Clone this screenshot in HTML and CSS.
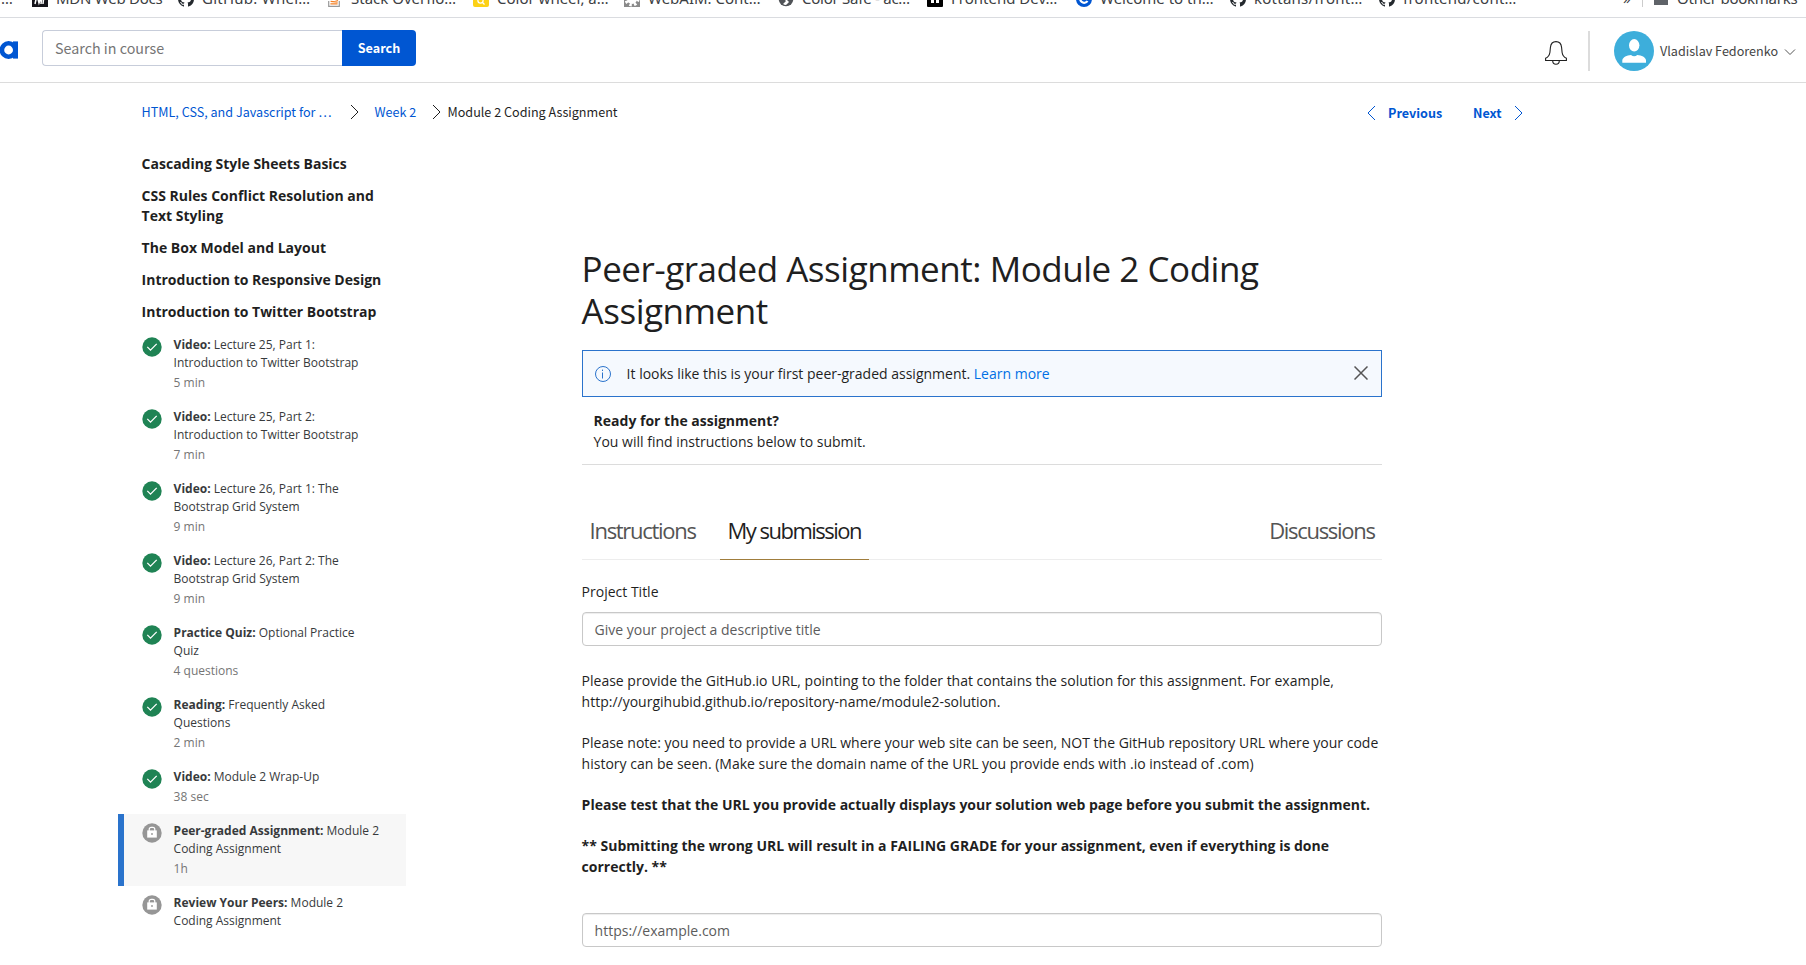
FILE: index.html
```html
<!DOCTYPE html>
<html lang="en">
<head>
<meta charset="utf-8">
<title>Module 2 Coding Assignment</title>
<link rel="stylesheet" href="styles.css">
</head>
<body>
<svg class="defs" width="0" height="0" aria-hidden="true">
  <symbol id="check" viewBox="0 0 20 20"><circle cx="10" cy="10" r="9.7" fill="#1f8354"/><path d="M5.3 9.9l3.2 3.2 6.2-6.2" fill="none" stroke="#fff" stroke-width="1.3"/></symbol>
  <symbol id="lock" viewBox="0 0 20 20"><circle cx="10" cy="10" r="9.7" fill="#969696"/><path d="M7.2 8V6.4a2 2 0 0 1 2-2h1.6a2 2 0 0 1 2 2V8" fill="none" stroke="#fff" stroke-width="1.2"/><path d="M5.2 7.4h9.6v7.2h-9.6z" fill="#fff"/><circle cx="10" cy="11" r=".9" fill="#969696"/></symbol>
  <symbol id="github" viewBox="0 0 16 16"><path fill="#24292e" d="M8 0C3.58 0 0 3.58 0 8c0 3.54 2.29 6.53 5.47 7.59.4.07.55-.17.55-.38 0-.19-.01-.82-.01-1.49-2.01.37-2.53-.49-2.69-.94-.09-.23-.48-.94-.82-1.13-.28-.15-.68-.52-.01-.53.63-.01 1.08.58 1.23.82.72 1.21 1.87.87 2.33.66.07-.52.28-.87.51-1.07-1.78-.2-3.64-.89-3.64-3.95 0-.87.31-1.59.82-2.15-.08-.2-.36-1.02.08-2.12 0 0 .67-.21 2.2.82.64-.18 1.32-.27 2-.27s1.36.09 2 .27c1.53-1.04 2.2-.82 2.2-.82.44 1.1.16 1.92.08 2.12.51.56.82 1.27.82 2.15 0 3.07-1.87 3.75-3.65 3.95.29.25.54.73.54 1.48 0 1.07-.01 1.93-.01 2.2 0 .21.15.46.55.38A8.01 8.01 0 0 0 16 8c0-4.42-3.58-8-8-8z"/></symbol>
</svg>

<nav class="bookmarks">
  <div class="bm bm-first"><span>…</span></div>
  <div class="bm tight"><svg viewBox="0 0 16 16"><path d="M0 0h16v16H0z" fill="#15141a"/><path d="M3 13L5 4l2 8 3-8-1 9M12 4l-1 9" fill="none" stroke="#fff" stroke-width="1.5"/></svg><span>MDN Web Docs</span></div>
  <div class="bm loose"><svg><use href="#github"/></svg><span>GitHub: Wher…</span></div>
  <div class="bm"><svg viewBox="0 0 16 16"><path d="M1.7 10v5.3h10.6V10" fill="none" stroke="#999" stroke-width="1.2"/><path d="M3.4 12.9h7.2M3.6 10.3l7.1.8M4.5 7.3l6.6 2.2" stroke="#f48024" stroke-width="1.3"/></svg><span>Stack Overflo…</span></div>
  <div class="bm"><svg viewBox="0 0 16 16"><rect width="16" height="16" rx="2" fill="#fcd116"/><circle cx="7.5" cy="9.5" r="2.6" fill="none" stroke="#fff" stroke-width="1.2"/><path d="M9.5 11.5l2 2" stroke="#fff" stroke-width="1.2"/></svg><span>Color wheel, a…</span></div>
  <div class="bm"><svg viewBox="0 0 16 16"><path d="M0 0h16v16H0z" fill="#8a8a8a"/><circle cx="8" cy="8" r="5" fill="#fff"/><circle cx="8" cy="8" r="6" fill="none" stroke="#fff" stroke-width="3" stroke-dasharray="2.4 2.3"/></svg><span>WebAIM: Cont…</span></div>
  <div class="bm tight"><svg viewBox="0 0 16 16"><circle cx="8" cy="8" r="7.3" fill="#505357"/><path d="M8 3v5l3 3-3 3a6 6 0 0 1-3-1l3-3-3-3z" fill="#fff"/></svg><span>Color Safe - ac…</span></div>
  <div class="bm"><svg viewBox="0 0 16 16"><rect width="16" height="16" rx="1" fill="#000"/><path d="M4 12V5h3v7M9 12V5h3v7" fill="#fff"/></svg><span>Frontend Dev…</span></div>
  <div class="bm"><svg viewBox="0 0 16 16"><circle cx="8" cy="8" r="8" fill="#0056d2"/><path d="M11.5 10A4 4 0 1 1 11 5" fill="none" stroke="#fff" stroke-width="2.2"/></svg><span>Welcome to th…</span></div>
  <div class="bm loose"><svg><use href="#github"/></svg><span>kottans/front…</span></div>
  <div class="bm loose"><svg><use href="#github"/></svg><span>frontend/cont…</span></div>
  <div class="bm"><span>»</span></div>
  <div class="bm bm-other tight"><svg viewBox="0 0 16 16"><path d="M1 2h5l2 2h7v10H1z" fill="#5f6368"/></svg><span>Other bookmarks</span></div>
</nav>

<header class="header">
  <svg class="logo" viewBox="0 0 18 18"><circle cx="8.6" cy="9" r="6.7" fill="none" stroke="#0056d2" stroke-width="4.6"/><path d="M13 .4h5v17.2h-5z" fill="#0056d2"/></svg>
  <form class="search">
    <div class="search-input">Search in course</div>
    <div class="search-btn">Search</div>
  </form>
  <svg class="bell" viewBox="0 0 24 26"><path d="M1.6 20.5v-2.3c2.6-1 3.8-2.600 4.300-5.700l.5-5C6.800 3.700 9 1.600 12 1.600s5.200 2.100 5.600 5.900l.5 5c.5 3.100 1.700 4.700 4.300 5.700v2.300zM8.700 20.700a3.300 3.500 0 0 0 6.600 0" fill="none" stroke="#1f1f1f" stroke-width="1.100"/></svg>
  <div class="user">
    <svg class="avatar" viewBox="0 0 40 40"><circle cx="20" cy="20" r="20" fill="#3daedb"/><ellipse cx="20.200" cy="14.300" rx="5.200" ry="6.200" fill="#fff"/><path d="M8.300 31.800v-2.600c.6-3 4.500-5 8.700-5.200a5 5 0 0 0 6.300 0c4.400.2 8.200 2.200 8.700 5.200v2.600z" fill="#fff"/></svg>
    <span class="uname">Vladislav Fedorenko</span>
    <svg class="caret" viewBox="0 0 12 8"><path d="M1 1.500l5 5 5-5" fill="none" stroke="#555" stroke-width="1"/></svg>
  </div>
</header>

<div class="crumbs">
  <a class="c1">HTML, CSS, and Javascript for …</a>
  <svg class="chev" viewBox="0 0 9 16"><path d="M1 1l7 7-7 7" fill="none" stroke="#1f1f1f"/></svg>
  <a class="c2">Week 2</a>
  <svg class="chev" viewBox="0 0 9 16"><path d="M1 1l7 7-7 7" fill="none" stroke="#1f1f1f"/></svg>
  <span class="c3">Module 2 Coding Assignment</span>
  <div class="pager">
    <svg class="chev" viewBox="0 0 9 16"><path d="M8 1L1 8l7 7" fill="none" stroke="#0056d2"/></svg>
    <b class="prev">Previous</b><b class="next">Next</b>
    <svg class="chev" viewBox="0 0 9 16"><path d="M1 1l7 7-7 7" fill="none" stroke="#0056d2"/></svg>
  </div>
</div>

<div class="body">
  <aside class="side">
    <h4>Cascading Style Sheets Basics</h4>
    <h4>CSS Rules Conflict Resolution and Text Styling</h4>
    <h4>The Box Model and Layout</h4>
    <h4>Introduction to Responsive Design</h4>
    <h4>Introduction to Twitter Bootstrap</h4>
    <div class="item"><svg><use href="#check"/></svg><div><b>Video:</b> Lecture 25, Part 1: Introduction to Twitter Bootstrap<small>5 min</small></div></div>
    <div class="item"><svg><use href="#check"/></svg><div><b>Video:</b> Lecture 25, Part 2: Introduction to Twitter Bootstrap<small>7 min</small></div></div>
    <div class="item"><svg><use href="#check"/></svg><div><b>Video:</b> Lecture 26, Part 1: The Bootstrap Grid System<small>9 min</small></div></div>
    <div class="item"><svg><use href="#check"/></svg><div><b>Video:</b> Lecture 26, Part 2: The Bootstrap Grid System<small>9 min</small></div></div>
    <div class="item"><svg><use href="#check"/></svg><div><b>Practice Quiz:</b> Optional Practice Quiz<small>4 questions</small></div></div>
    <div class="item"><svg><use href="#check"/></svg><div><b>Reading:</b> Frequently Asked Questions<small>2 min</small></div></div>
    <div class="item"><svg><use href="#check"/></svg><div><b>Video:</b> Module 2 Wrap-Up<small>38 sec</small></div></div>
    <div class="item active"><svg><use href="#lock"/></svg><div><b>Peer-graded Assignment:</b> Module 2 Coding Assignment<small>1h</small></div></div>
    <div class="item"><svg><use href="#lock"/></svg><div><b>Review Your Peers:</b> Module 2 Coding Assignment</div></div>
  </aside>

  <main class="main">
    <h1>Peer-graded Assignment: Module 2 Coding Assignment</h1>
    <div class="alert">
      <svg class="info" viewBox="0 0 16 16"><circle cx="8" cy="8" r="7.500" fill="none" stroke="#2a73cc"/><path d="M7.500 6.500v6M7.500 3.600v1.400" stroke="#2a73cc"/></svg>
      <span>It looks like this is your first peer-graded assignment. <a>Learn more</a></span>
      <svg class="close" viewBox="0 0 14 14"><path d="M.5.5l13 13M13.500.5l-13 13" stroke="#555" stroke-width="1.500"/></svg>
    </div>
    <div class="ready"><b>Ready for the assignment?</b><br>You will find instructions below to submit.</div>
    <div class="tabs"><div class="tab first">Instructions</div><div class="tab on">My submission</div><div class="tab last">Discussions</div></div>
    <label class="label">Project Title</label>
    <div class="field">Give your project a descriptive title</div>
    <div class="text">
      <p>Please provide the GitHub.io URL, pointing to the folder that contains the solution for this assignment. For example, http://yourgihubid.github.io/repository-name/module2-solution.</p>
      <p>Please note: you need to provide a URL where your web site can be seen, NOT the GitHub repository URL where your code history can be seen. (Make sure the domain name of the URL you provide ends with .io instead of .com)</p>
      <p><b>Please test that the URL you provide actually displays your solution web page before you submit the assignment.</b></p>
      <p><b>** Submitting the wrong URL will result in a FAILING GRADE for your assignment, even if everything is done correctly. **</b></p>
    </div>
    <div class="field">https://example.com</div>
  </main>
</div>
</body>
</html>
```

FILE: styles.css
```css
* { box-sizing: border-box; }
body { margin: 0; height: 965px; overflow: hidden; background: #fff; color: #1f1f1f; font: 14px/21px "Open Sans", sans-serif; }
svg { display: block; flex: none; }
.defs { position: absolute; }

/* Browser bookmark bar */
.bookmarks { display: grid; grid-template-columns: 32px 146px 149px 146px 151px 154px 149px 149px 154px 149px 244px 19px 164px; height: 18px; border-bottom: 1px solid #dadce0; overflow: hidden; font: 15px/20px "Noto Sans", sans-serif; color: #3c4043; }
.bm { display: flex; gap: 8px; height: 20px; margin-top: -12px; white-space: nowrap; }
.bm svg { width: 16px; height: 16px; margin-top: 3px; }
.bm-first { padding-left: 1px; }
.bm-other { border-left: 1px solid #ccc; padding-left: 10px; height: 19px; }
.tight { letter-spacing: -.25px; }
.loose { letter-spacing: .25px; }

/* Site header */
.header { display: flex; height: 65px; border-bottom: 1px solid #dcdcdc; font-family: "Noto Sans CJK SC", sans-serif; padding-right: 10px; }
.logo { width: 18px; height: 18px; margin-top: 23px; }
.search { display: flex; margin: 12px 0 0 24px; height: 36px; }
.search-input { width: 300px; border: 1px solid #c7cdda; border-right: 0; border-radius: 4px 0 0 4px; padding-left: 12px; font-size: 14.3px; line-height: 33px; color: #757575; }
.search-btn { width: 74px; background: #0056d2; border-radius: 0 4px 4px 0; color: #fff; font-weight: 700; font-size: 12.6px; line-height: 36px; text-align: center; }
.bell { width: 24px; height: 26px; margin: 22px 20px 0 auto; }
.user { display: flex; align-items: center; height: 40px; margin-top: 13px; padding-left: 24px; border-left: 2px solid #dcdcdc; }
.avatar { width: 40px; height: 40px; }
.uname { margin: 0 7px 2px 6px; width: 117px; font-size: 12.6px; color: #444; white-space: nowrap; }
.caret { width: 12px; height: 8px; margin-top: 2px; }

/* Breadcrumbs and pager */
.crumbs { display: flex; align-items: center; height: 30px; margin: 14px 0 0 141.600px; width: 1381.400px; font-family: "Noto Sans CJK SC", sans-serif; font-size: 12.6px; white-space: nowrap; }
.crumbs a, .pager { color: #0056d2; }
.crumbs a, .crumbs span, .crumbs b { margin-bottom: 2px; }
.chev { width: 9px; height: 16px; }
.c1 { width: 208.400px; }
.c2 { width: 57.500px; margin-left: 15.500px; }
.c3 { margin-left: 6.500px; }
.pager { display: flex; align-items: center; margin: 2px 0 0 auto; }
.prev { width: 85px; margin-left: 12px; }
.next { width: 41px; }

.body { display: flex; }

/* Course outline */
.side { width: 288px; margin: 21px 0 0 118px; }
.side h4 { margin: 0; padding: 6px 16px 6px 23.600px; font-size: 14px; line-height: 20px; }
.item { display: flex; padding: 8px 0 8px 18px; border-left: 6px solid transparent; font-size: 12px; line-height: 18px; color: #373a3c; }
.item svg { width: 20px; height: 20px; margin: 1px 11.600px 0 0; }
.item div { width: 208px; }
.item small { display: block; margin-top: 2px; font-size: 12px; color: #757575; }
.item.active { background: #f7f7f7; border-color: #2a73cc; }

/* Assignment */
.main { width: 800px; margin: 121px 0 0 175.600px; }
h1 { margin: 0; font-size: 35px; line-height: 42px; font-weight: 400; letter-spacing: -.47px; }
.alert { display: flex; align-items: center; height: 47px; margin-top: 18px; padding: 0 13px 0 12px; border: 1px solid #2a73cc; background: #f5f9fe; }
.alert a { color: #0070e5; }
.info { width: 16px; height: 16px; margin-right: 16px; }
.close { width: 14px; height: 14px; margin: 0 0 1px auto; }
.ready { padding: 13px 12px 12px; border-bottom: 1px solid #dcdcdc; height: 68px; }
.tabs { display: flex; height: 95px; padding-top: 50px; border-bottom: 1px solid #ededed; }
.tab { height: 45px; padding: 0 8px; font-size: 22px; line-height: 30px; letter-spacing: -1.300px; color: #545454; white-space: nowrap; }
.tab.first { width: 122px; margin-right: 16px; }
.tab.on { width: 149px; letter-spacing: -1.520px; color: #1f1f1f; border-bottom: 1px solid #a07d3c; }
.tab.last { margin-left: auto; padding-right: 7px; }
.label { display: block; margin: 21px 0 10px; }
.field { height: 34px; padding: 0 12px; border: 1px solid #c8c8c8; border-radius: 4px; box-shadow: inset 0 1px 1px rgba(0, 0, 0, .075); line-height: 33px; color: #5c5c5c; }
.text { margin: 24px 0 36px; }
.text p { margin: 0 0 20px; }
.text p:last-child { margin: 0; }
```
